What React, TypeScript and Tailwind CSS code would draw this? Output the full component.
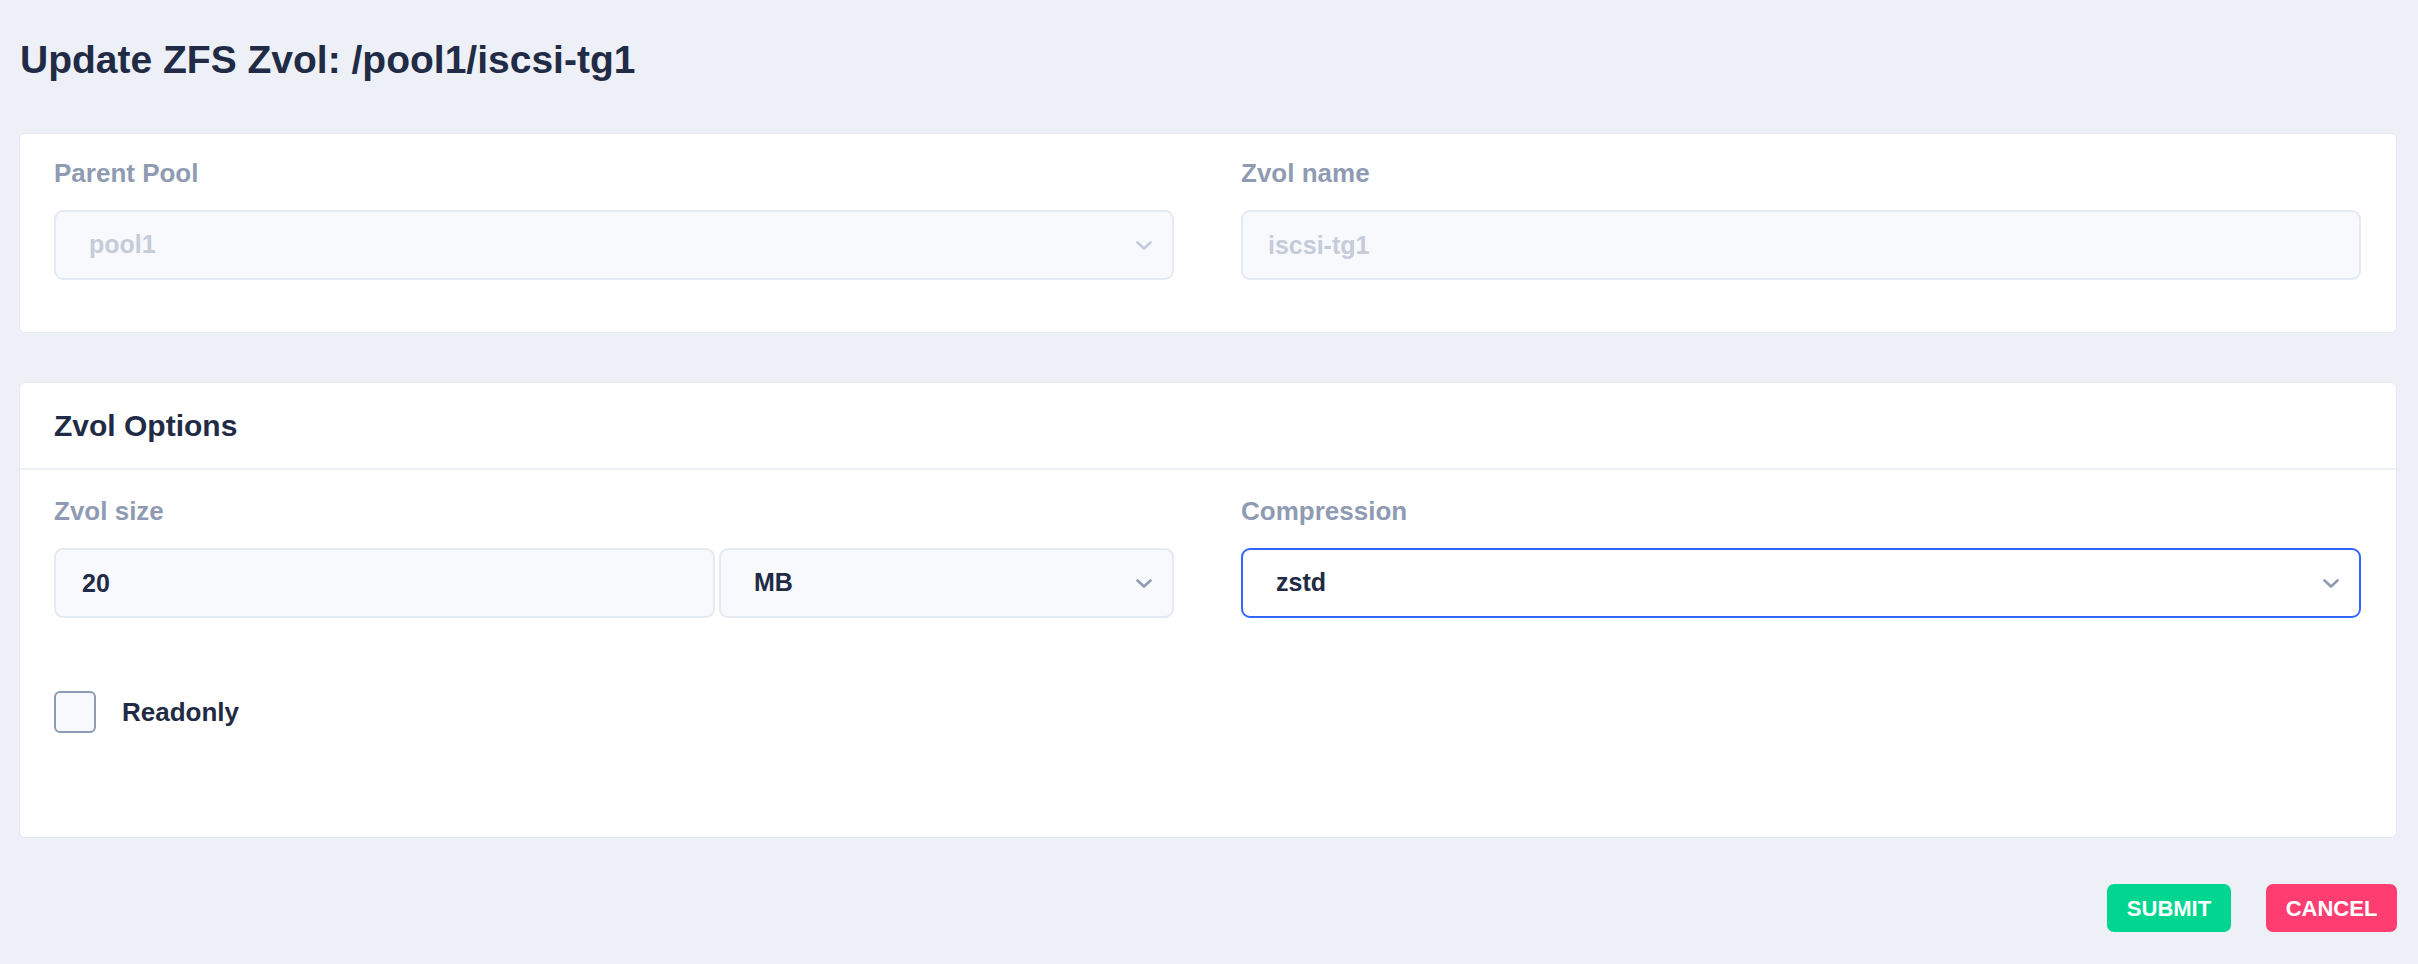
import { useState } from "react"

const FONT = "font-['Liberation_Sans',Arial,sans-serif]"

function Chevron({ muted }: { muted?: boolean }) {
  return (
    <svg width="16" height="9" viewBox="0 0 16 9" fill="none" className="shrink-0">
      <path
        d="M1.5 1.5 L8 7.5 L14.5 1.5"
        stroke={muted ? "#c5ccd9" : "#8f9bb3"}
        strokeWidth="2.6"
        strokeLinecap="round"
        strokeLinejoin="round"
      />
    </svg>
  )
}

function FieldLabel({ children }: { children: React.ReactNode }) {
  return <div className="text-[26px] font-bold leading-[32px] text-[#8f9bb3]">{children}</div>
}

interface SelectBoxProps {
  value: string
  disabled?: boolean
  focused?: boolean
  className?: string
}

function SelectBox({ value, disabled, focused, className = "" }: SelectBoxProps) {
  const border = focused ? "border-[#3366ff] bg-white" : "border-[#e4e9f2] bg-[#f7f9fc]"
  return (
    <button
      type="button"
      disabled={disabled}
      className={`flex h-[70px] items-center justify-between rounded-[9px] border-2 pl-[33px] pr-[20px] text-left ${border} ${className}`}
    >
      <span className={`text-[25px] font-bold ${disabled ? "text-[#c5ccd9]" : "text-[#222b45]"}`}>{value}</span>
      <Chevron muted={disabled} />
    </button>
  )
}

export default function App() {
  const [readonly, setReadonly] = useState(false)
  const [size, setSize] = useState("20")

  return (
    <div className={`min-h-screen bg-[#edf1f7] pl-[19px] pr-[21px] pt-[36px] text-[#222b45] ${FONT}`}>
      <h1 className="pl-px text-[39px] font-bold leading-[47px]">Update ZFS Zvol: /pool1/iscsi-tg1</h1>

      {/* dataset location */}
      <div className="mt-[50px] rounded-[6px] border border-[#e4e9f2] bg-white pb-[52px] pl-[34px] pr-[35px] pt-[23px]">
        <div className="grid grid-cols-2 gap-x-[67px]">
          <div>
            <FieldLabel>Parent Pool</FieldLabel>
            <SelectBox value="pool1" disabled className="mt-[21px] w-full" />
          </div>
          <div>
            <FieldLabel>Zvol name</FieldLabel>
            <input
              disabled
              value="iscsi-tg1"
              className="mt-[21px] h-[70px] w-full rounded-[9px] border-2 border-[#e4e9f2] bg-[#f7f9fc] px-[25px] text-[25px] font-bold text-[#c5ccd9] outline-none"
            />
          </div>
        </div>
      </div>

      {/* options */}
      <div className="mt-[49px] rounded-[6px] border border-[#e4e9f2] bg-white">
        <div className="border-b-2 border-[#edf1f7] pb-[24px] pl-[34px] pt-[25px] text-[30px] font-bold leading-[36px]">
          Zvol Options
        </div>
        <div className="pb-[104px] pl-[34px] pr-[35px] pt-[25px]">
          <div className="grid grid-cols-2 gap-x-[67px]">
            <div>
              <FieldLabel>Zvol size</FieldLabel>
              <div className="mt-[21px] flex gap-[4px]">
                <input
                  value={size}
                  onChange={(e) => setSize(e.target.value)}
                  className="h-[70px] w-[661px] rounded-[9px] border-2 border-[#e4e9f2] bg-[#f7f9fc] px-[26px] text-[25px] font-bold text-[#222b45] outline-none"
                />
                <SelectBox value="MB" className="flex-1" />
              </div>
            </div>
            <div>
              <FieldLabel>Compression</FieldLabel>
              <SelectBox value="zstd" focused className="mt-[21px] w-full" />
            </div>
          </div>

          <label className="mt-[73px] flex cursor-pointer items-center gap-[26px]">
            <span
              onClick={() => setReadonly(!readonly)}
              className="h-[42px] w-[42px] rounded-[6px] border-2 border-[#8f9bb3] bg-[#f7f9fc]"
            />
            <span className="text-[26px] font-bold text-[#222b45]">Readonly</span>
          </label>
        </div>
      </div>

      <div className="mt-[46px] flex justify-end gap-[35px]">
        <button className="h-[48px] w-[124px] rounded-[7px] bg-[#00d68f] text-[22px] font-bold text-white">
          SUBMIT
        </button>
        <button className="h-[48px] w-[131px] rounded-[7px] bg-[#ff3d71] text-[22px] font-bold text-white">
          CANCEL
        </button>
      </div>
    </div>
  )
}
